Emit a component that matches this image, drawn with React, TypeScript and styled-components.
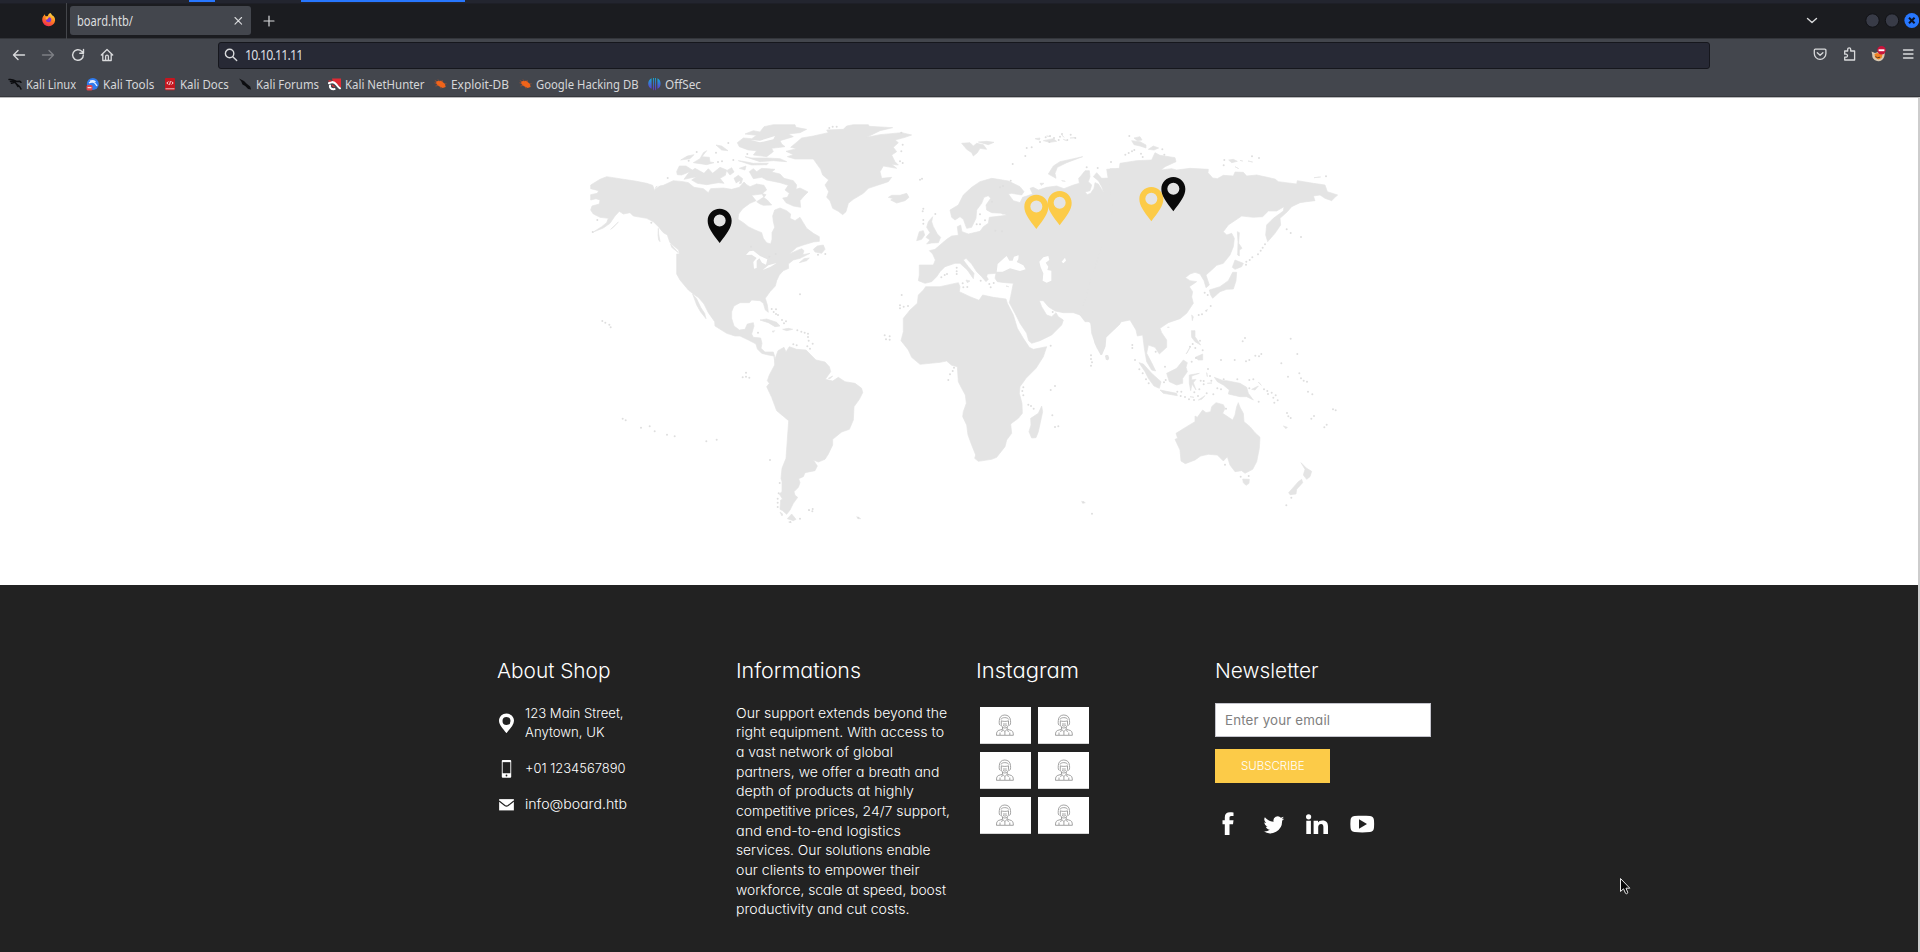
import React, { useLayoutEffect, useRef, useState } from 'react';
import styled, { createGlobalStyle } from 'styled-components';

const GlobalStyle = createGlobalStyle`
  * { box-sizing: border-box; }
  html, body { margin: 0; padding: 0; overflow: hidden; background: #fff; }
  ul { list-style: none; margin: 0; padding: 0; }
`;

const uiFont = `'Noto Sans', 'Open Sans', sans-serif`;
const siteFont = `Inter, 'Open Sans', sans-serif`;

/* ---------- text fitted to a set width ---------- */

const FitBox = styled.span<{ $w: number }>`
  display: block;
  flex: none;
  width: ${(p) => p.$w}px;
  white-space: nowrap;
`;
const FitInner = styled.span<{ $track?: number }>`
  display: inline-block;
  transform-origin: 0 50%;
  letter-spacing: ${(p) => p.$track ?? 0}px;
`;

function Fit({ w, track, children }: { w: number; track?: number; children: string }) {
  const ref = useRef<HTMLSpanElement>(null);
  const [scale, setScale] = useState(1);
  useLayoutEffect(() => {
    const el = ref.current;
    if (!el) return;
    el.style.transform = 'none';
    const natural = el.getBoundingClientRect().width;
    if (natural > 0) setScale(w / natural);
    el.style.transform = `scaleX(${w / natural})`;
  }, [w, children]);
  return (
    <FitBox $w={w}>
      <FitInner ref={ref} $track={track} style={{ transform: `scaleX(${scale})` }}>
        {children}
      </FitInner>
    </FitBox>
  );
}

/* ---------- browser chrome ---------- */

const Screen = styled.div`
  position: relative;
  width: 1920px;
  height: 952px;
  overflow: hidden;
  display: flex;
  flex-direction: column;
  background: #fff;
`;

const DesktopPanel = styled.div`
  display: flex;
  height: 4px;
  flex: none;
  padding-left: 189px;
  gap: 86px;
  background: linear-gradient(#23252f 0 3px, #1e1f27 3px);
`;
const PanelTask = styled.span<{ $w: number }>`
  width: ${(p) => p.$w}px;
  height: 2px;
  background: #2777ff;
`;

const TabStrip = styled.div`
  display: flex;
  align-items: center;
  height: 35px;
  flex: none;
  background: #1b1c20;
  border-bottom: 1px solid #33353a;
`;
const PinnedTab = styled.div`
  width: 67px;
  height: 36px;
  padding: 9px 0 0 41px;
  border-right: 1px solid #44464b;
`;
const Tab = styled.div`
  display: flex;
  align-items: center;
  justify-content: space-between;
  width: 181px;
  height: 29px;
  margin: 0 0 1px 3px;
  padding: 0 8px 0 7px;
  border-radius: 3px;
  background: #43464d;
  color: #dcdddf;
  font: 13.5px/20px ${uiFont};
`;
const PlusSlot = styled.div`
  display: flex;
  align-items: center;
  margin: 0 0 1px 12px;
  flex: 1;
`;
const WindowControls = styled.div`
  display: flex;
  align-items: center;
  padding-right: 1px;
  svg { display: block; }
`;

const Toolbar = styled.div`
  display: flex;
  align-items: center;
  height: 31px;
  flex: none;
  background: #43464d;
  padding: 1px 4px 0 11px;
  svg { display: block; flex: none; }
`;
const NavButtons = styled.div`
  display: flex;
  gap: 13.4px;
  width: 207px;
`;
const UrlBar = styled.div`
  display: flex;
  align-items: center;
  gap: 7px;
  width: 1492px;
  height: 27px;
  padding: 0 0 0 5px;
  border: 1px solid #16171d;
  border-radius: 3px;
  background: #272935;
  color: #dcdde0;
  font: 14px/22px ${uiFont};
`;
const ToolButtons = styled.div`
  display: flex;
  justify-content: space-between;
  flex: 1;
  padding-left: 102px;
`;

const Bookmarks = styled.ul`
  display: flex;
  gap: 8.5px;
  height: 27px;
  flex: none;
  padding: 0 0 0 8px;
  background: #43464d;
  border-bottom: 1px solid #35373c;
`;
const Bookmark = styled.li`
  display: flex;
  align-items: center;
  height: 28px;
  gap: 4px;
  color: #d6d7d9;
  font: 12.8px/20px ${uiFont};
  svg { display: block; flex: none; }
`;

const line = { fill: 'none', stroke: '#d9dadc', strokeWidth: 1.4, strokeLinecap: 'round', strokeLinejoin: 'round' } as const;

const Firefox = () => (
  <svg width="15" height="15" viewBox="0 0 15 15">
    <defs>
      <linearGradient id="ffx" x1=".8" y1="0" x2=".3" y2="1">
        <stop offset="0" stopColor="#ffe64a" />
        <stop offset=".45" stopColor="#ff8a1f" />
        <stop offset="1" stopColor="#f5234f" />
      </linearGradient>
    </defs>
    <path d="M9.2 1c1.2.8 1.6 1.5 1.9 2.3 1.9.9 3.2 2.600 3 5.200A6.300 6.300 0 0 1 7.700 14.200 6.300 6.300 0 0 1 1.200 8c0-2.200.7-3.500 1.700-4.500l.3-1.300L4.800 4.200 6.800 4c.5-1.600 1.300-2.500 2.400-3z" fill="url(#ffx)" />
    <path d="M7.800 5.200c2 .2 2.800 1.700 2.400 3.200-.4 1.400-1.600 2-2.800 1.900C5.600 10.200 4.900 9 5 7.700l1.700-.5z" fill="#7a35d8" />
    <path d="M4.500 5.500c.9-.7 2-.8 3.300-.300L6.800 6.600 5 7.700z" fill="#ffb636" />
  </svg>
);

const Dragon = () => (
  <svg width="14" height="14" viewBox="0 0 14 14">
    <path d="M1 2.500C4 2 6 3 8 4.200M2.500 4.500C5 3.700 7 4.500 8 6.500c1 1.700 3.500 1.200 5 5.500M3.500 6.200 6 5.600M8 4.500l3.800-.2 1.200 1M8.500 7 10 9.500" fill="none" stroke="#0c0d10" strokeWidth="1.500" strokeLinecap="round" />
  </svg>
);
const Tools = () => (
  <svg width="14" height="14" viewBox="0 0 14 14">
    <circle cx="7.800" cy="7" r="6" fill="#2f7bef" />
    <path d="M4 6c3-2 6-1 8 3M5 4.200c2-.8 4-.5 5.500.800" stroke="#e9f1ff" strokeWidth="1.300" fill="none" />
    <rect x="1.500" y="8" width="6" height="5.500" rx="1.500" fill="#e0454b" />
    <path d="M2.600 10.700h3.800" stroke="#fff" />
  </svg>
);
const Docs = () => (
  <svg width="14" height="14" viewBox="0 0 14 14">
    <rect x="3" y="1" width="10" height="12.300" rx="1" fill="#c5161f" />
    <path d="M3.500 11.800h9" stroke="#f3d8d8" strokeWidth=".9" />
    <path d="M6.300 4.500 4.800 6l1.500 1.500M9.700 4.500 11.200 6 9.700 7.500M8.400 4.200 7.600 7.800" stroke="#fff" strokeWidth=".9" fill="none" />
  </svg>
);
const Blade = () => (
  <svg width="14" height="14" viewBox="0 0 14 14">
    <path d="M1 1.500 6 4l3 3 3.200 2.600.9 2.900-3-.6L7.200 9 4.500 7.500 3.300 4.500z" fill="#0c0d10" />
  </svg>
);
const NetHunter = () => (
  <svg width="14" height="14" viewBox="0 0 14 14">
    <path d="M5 1.500h9V11L9.500 6.500 6 5z" fill="#e12a34" />
    <path d="M2 6.200c3.500-2.200 6-.5 7.500 1.500s2 2.800 3.500 3.600M3 8.500c-.5 2 1 4 4.500 3.600" fill="none" stroke="#fff" strokeWidth="2" strokeLinecap="round" />
    <path d="M1.500 3.800l3 .4M5 8l2.500 2" stroke="#e12a34" strokeWidth="1.300" />
  </svg>
);
const Bug = () => (
  <svg width="14" height="14" viewBox="0 0 14 14">
    <path d="M3.500 4.200 8 3.800l3.800 3 .9 3.200-3 .9-4.200-2L3 6.500z" fill="#f0641a" />
    <path d="M1.500 5.800 4 6.500M2.500 9l3-.7M5 2.500l1.500 2M9 3l.5 2M12 7l1.500-.3M8 11.500l-.5-1.500M1.800 3.500l2.200 1.200" stroke="#b6512a" strokeWidth=".7" />
  </svg>
);
const OffSec = () => (
  <svg width="14" height="14" viewBox="0 0 14 14">
    <defs>
      <linearGradient id="ofs" x1="0" y1="0" x2="0" y2="1">
        <stop offset="0" stopColor="#12b0d8" />
        <stop offset="1" stopColor="#6a2ad0" />
      </linearGradient>
    </defs>
    <path d="M4.600 1.300v10.500C2.300 11 1.200 9 1.200 6.800s1.100-4.400 3.400-5.500zM6 .9h.9v12.500L6 12.500zM8.100.9H9v11.600l-.9.9zM10.400 1.300c2.300 1.100 3.200 3.300 3.200 5.500s-.9 4.200-3.200 5z" fill="url(#ofs)" />
  </svg>
);

const bookmarks: { label: string; w: number; Icon: () => React.ReactElement }[] = [
  { label: 'Kali Linux', w: 50, Icon: Dragon },
  { label: 'Kali Tools', w: 51.300, Icon: Tools },
  { label: 'Kali Docs', w: 48.800, Icon: Docs },
  { label: 'Kali Forums', w: 63, Icon: Blade },
  { label: 'Kali NetHunter', w: 79.500, Icon: NetHunter },
  { label: 'Exploit-DB', w: 58, Icon: Bug },
  { label: 'Google Hacking DB', w: 102.500, Icon: Bug },
  { label: 'OffSec', w: 36, Icon: OffSec },
];

function BrowserChrome() {
  return (
    <>
      <DesktopPanel>
        <PanelTask $w={26} />
        <PanelTask $w={164} />
      </DesktopPanel>
      <TabStrip>
        <PinnedTab><Firefox /></PinnedTab>
        <Tab>
          <Fit w={56}>board.htb/</Fit>
          <svg width="10" height="10" viewBox="0 0 10 10"><path d="M2 1.500l6.600 6.600M8.600 1.500 2 8.100" {...line} strokeWidth={1.100} /></svg>
        </Tab>
        <PlusSlot>
          <svg width="12" height="12" viewBox="0 0 12 12"><path d="M6 1v10M1 6h10" {...line} strokeWidth={1.200} /></svg>
        </PlusSlot>
        <WindowControls>
          <svg width="114" height="18" viewBox="0 0 114 18">
            <path d="M2.500 6.500 7 10.500l4.500-4" {...line} />
            <circle cx="67.500" cy="8.500" r="6.700" fill="#383b47" stroke="#111216" />
            <circle cx="87" cy="8.500" r="6.700" fill="#383b47" stroke="#111216" />
            <circle cx="106.800" cy="8.500" r="7.400" fill="#2777ff" />
            <path d="M104 5.700l5.600 5.600M109.600 5.700 104 11.300" stroke="#0d1220" strokeWidth="2" />
          </svg>
        </WindowControls>
      </TabStrip>
      <Toolbar>
        <NavButtons>
          <svg width="16" height="16" viewBox="0 0 16 16"><path d="M2.500 8h11M7 3.500 2.500 8 7 12.500" {...line} /></svg>
          <svg width="16" height="16" viewBox="0 0 16 16"><path d="M2.500 8h11M9 3.500 13.500 8 9 12.500" {...line} stroke="#7d7f84" /></svg>
          <svg width="16" height="16" viewBox="0 0 16 16"><path d="M13.300 7.900A5.300 5.300 0 1 1 11.700 4.200l1.600 1.500M13.500 2.500v3.700H9.800" {...line} /></svg>
          <svg width="16" height="16" viewBox="0 0 16 16"><path d="M2.300 8 8 2.500 13.700 8M3.800 7v6.500h8.400V7M6.600 13.300V9.500a1.400 1.400 0 0 1 2.800 0v3.800" {...line} strokeWidth={1.300} /></svg>
        </NavButtons>
        <UrlBar>
          <svg width="14" height="14" viewBox="0 0 14 14"><circle cx="5.600" cy="5.500" r="4.200" {...line} /><path d="M8.800 8.700 12.700 12.600" {...line} /></svg>
          <Fit w={57.500} track={-0.900}>10.10.11.11</Fit>
        </UrlBar>
        <ToolButtons>
          <svg width="16" height="16" viewBox="0 0 16 16"><path d="M3.300 3.200h9.600a1 1 0 0 1 1 1V7.500a5.800 5.800 0 0 1-11.600 0V4.200a1 1 0 0 1 1-1zM5.300 6.700 8.100 9.300l2.800-2.600" {...line} strokeWidth={1.300} /></svg>
          <svg width="16" height="16" viewBox="0 0 16 16"><path d="M3.700 5h3V3.300a1.500 1.500 0 0 1 3 0V5h3.900v9H3.700V11.200H5a1.500 1.500 0 0 0 0-3H3.700z" {...line} strokeWidth={1.300} /></svg>
          <svg width="18" height="18" viewBox="-1 0 18 18">
            <path d="M1.500 5.500 5 7l3-1 3.500 1.300L14.500 6c.8 4-1 8.800-6 9.300C4.500 14.800 1.800 12 2.300 9z" fill="#d9c8ae" />
            <path d="M4.500 8 7 7l5.500 1.500-1 3.500-3 1.500L5 11.500z" fill="#ef8222" />
            <path d="M5.500 10.500l1.800 1.200 2.800-.5" stroke="#3a2a20" fill="none" strokeWidth=".8" />
            <circle cx="11.500" cy="4.200" r="4.200" fill="#c8143c" />
            <rect x="8.600" y="3.300" width="5.800" height="1.900" fill="#fff" />
          </svg>
          <svg width="16" height="16" viewBox="0 0 16 16"><path d="M3.500 4h9.500M3.500 8h9.500M3.500 12h9.500" {...line} strokeWidth={1.300} /></svg>
        </ToolButtons>
      </Toolbar>
      <Bookmarks>
        {bookmarks.map(({ label, w, Icon }) => (
          <Bookmark key={label}>
            <Icon />
            <Fit w={w}>{label}</Fit>
          </Bookmark>
        ))}
      </Bookmarks>
    </>
  );
}

/* ---------- world map ---------- */

const Page = styled.main`
  display: flex;
  flex-direction: column;
  flex: 1;
  border-right: 2px solid #cdcdcd;
  border-top: 1px solid #b9b9bb;
`;
const MapSection = styled.section`
  height: 487px;
  flex: none;
  padding: 12.4px 0 0 580px;
  svg { display: block; }
`;

type Dots = [number, number][];
const Islands = ({ at, r = 3 }: { at: Dots; r?: number }) => (
  <>
    {at.map(([x, y], i) => (
      <circle key={i} cx={x} cy={y} r={r} />
    ))}
  </>
);

const Pin = ({ x, y, color }: { x: number; y: number; color: string }) => (
  <path
    transform={`translate(${x} ${y})`}
    fill={color}
    fillRule="evenodd"
    d="M0 0C20 0 36 16 36 36C36 56 22 74 0 103C-22 74 -36 56 -36 36C-36 16 -20 0 0 0ZM0 17.500A18 18 0 1 0 0 53.500A18 18 0 1 0 0 17.500Z"
  />
);

function WorldMap() {
  return (
    <svg width="770" height="420" viewBox="0 0 2310 1260">
      <g fill="#e4e4e4" stroke="#e4e4e4" strokeWidth="2" strokeLinejoin="round">
        {/* North and Central America */}
        <path d="M32 225L60 208 80 200 100 203 125 207 165 213 200 220 218 226 224 242 228 230 250 226 280 212 310 215 325 218 342 232 370 236 385 248 392 236 430 234 455 238 478 232 492 216 500 224 510 230 530 222 552 226 560 240 545 252 515 256 528 272 510 280 488 296 476 312 474 328 490 338 505 350 525 360 545 368 550 385 560 398 572 402 576 388 576 368 584 352 580 335 578 318 584 300 600 294 620 302 632 312 630 325 645 332 660 322 668 335 680 355 700 370 718 380 718 394 700 396 670 405 650 412 628 432 650 422 665 416 672 422 668 434 690 430 660 445 640 450 625 462 626 475 610 482 598 495 590 512 586 528 570 545 556 565 562 585 565 607 556 600 550 580 540 572 515 570 508 578 480 578 462 588 455 605 455 625 462 648 478 660 495 658 502 642 520 638 522 648 515 672 520 682 542 684 546 700 543 715 555 726 580 726 583 738 565 735 545 730 532 717 528 702 505 690 480 678 465 678 440 670 405 648 404 635 385 608 372 582 356 563 340 552 325 540 300 510 290 492 290 432 298 432 296 420 270 398 262 375 250 368 235 350 220 335 200 325 160 318 150 308 130 312 118 304 105 318 90 340 70 354 40 366 65 350 80 338 85 325 60 322 40 312 32 300 36 288 58 282 60 270 48 266 32 270 32 254 52 250 56 242 32 236Z" />
        <path d="M338 552L350 585 362 606 378 626 374 610 362 592 350 566Z" />
        <path d="M272 402L295 428 275 412ZM235 355L234 375 236 390 240 395 236 372ZM92 358L115 336 100 352Z" />
        <path d="M540 630L560 627 590 637 600 648 585 650 565 638ZM608 658L625 655 638 658 620 662ZM576 664L584 662 580 667Z" />
        <path d="M700 418L712 408 730 405 735 418 725 430 705 426ZM658 458L672 446 688 444 680 452Z" />
        {/* Canadian archipelago */}
        <path d="M495 72L520 62 540 66 552 50 580 44 645 44 648 52 680 58 660 68 625 72 640 80 600 92 605 102 615 110 575 115 580 125 560 140 520 135 530 122 505 120 478 110 472 98 490 84 515 86 530 76Z" />
        <path d="M290 185L298 168 318 168 340 182 322 188 305 195 292 194ZM325 190L345 175 372 190 385 176 398 190 420 172 440 180 436 196 420 205 432 220 415 218 380 224 352 220 335 210 350 200 312 208ZM440 182L455 173 462 186 450 195ZM462 205L475 196 488 206 484 220 470 222ZM478 175L498 168 495 180ZM302 150L322 138 342 134 330 146ZM340 158L360 146 370 128 380 122 366 140 388 142 390 156 402 158 380 164ZM408 105L425 108 444 122 425 120ZM475 152L495 155 520 160 565 160 560 164 515 165ZM495 140L515 144 560 144 600 146 620 155 580 152 540 155Z" />
        <path d="M508 185L520 176 530 185 545 175 585 178 575 186 600 192 612 205 640 212 650 225 648 238 660 234 684 246 672 258 660 272 662 292 640 288 618 278 608 264 622 262 628 250 615 240 625 226 600 218 560 210 545 202 520 206ZM530 275L550 262 562 270 575 285 550 286 540 282ZM545 250L558 254 552 262Z" />
        {/* Greenland and Iceland */}
        <path d="M618 124L650 116 632 112 652 95 665 84 700 78 745 68 740 60 790 58 800 48 820 44 865 44 868 49 938 53 900 62 860 82 900 74 965 68 995 75 975 82 945 90 955 98 940 112 950 125 935 135 945 155 955 165 935 163 950 175 910 168 900 185 905 205 935 202 925 215 895 225 865 235 850 250 820 268 805 280 798 305 788 314 775 304 758 295 750 272 740 262 746 245 735 225 746 210 728 195 722 178 700 147 645 147 622 140 640 134Z" />
        <path d="M925 262L935 256 960 256 980 250 987 262 975 272 950 279 932 270 940 266Z" />
        {/* South America */}
        <g transform="translate(0 600)">
          <path d="M580 130L584 150 594 122 612 112 618 126 628 110 650 118 678 120 690 132 708 150 735 156 748 170 752 185 736 208 758 213 775 202 795 215 825 220 845 235 848 248 838 268 822 290 820 330 808 358 785 366 758 388 758 405 745 432 735 448 715 456 700 450 712 468 705 482 675 488 670 500 656 506 660 518 655 532 642 545 645 556 653 562 640 580 630 600 620 613 608 602 600 598 602 570 608 568 598 552 606 545 606 515 603 505 606 475 618 445 626 332 590 302 575 262 560 230 568 220 562 212 568 195 584 165 583 140Z" />
          <path d="M622 626L635 612 648 628 640 632ZM600 606L608 612 606 618ZM745 205L758 198 750 206ZM626 636L634 638ZM684 600L690 602ZM830 620L842 626 834 626Z" />
        </g>
        {/* Africa and Europe */}
        <g transform="translate(900 0)">
          <path d="M137 530L180 530 235 518 240 530 238 545 270 560 297 571 308 555 340 562 378 567 382 580 400 615 412 655 430 685 448 712 460 718 500 710 490 740 468 775 438 805 420 830 418 850 426 880 427 910 415 925 392 942 395 970 380 990 375 1010 350 1042 335 1048 295 1054 284 1045 287 1035 275 1005 264 975 260 945 248 920 250 905 259 880 256 855 245 835 235 815 232 770 215 766 200 753 180 757 120 763 95 742 85 720 63 692 70 665 70 625 90 600 112 580 115 555 130 540Z" />
          <path d="M118 465L160 465 166 450 158 432 148 422 165 418 180 405 200 388 215 378 235 376 232 350 242 345 246 365 265 372 300 364 310 350 325 340 328 322 380 316 370 310 335 308 320 300 318 285 332 265 325 257 312 262 305 280 290 300 288 325 275 352 260 355 250 328 240 320 225 330 215 322 210 300 235 285 250 255 275 232 300 215 335 205 355 208 385 213 420 230 432 245 425 255 395 250 385 252 400 272 420 278 428 262 440 258 458 252 450 235 460 232 475 240 500 232 530 228 552 236 580 225 598 220 596 205 605 195 615 182 628 182 630 200 625 215 635 225 630 242 615 246 622 254 632 250 642 235 645 218 655 222 665 238 672 250 665 230 655 212 640 200 650 188 665 205 690 204 700 210 698 195 682 185 690 176 720 178 720 642 678 682 675 710 663 735 650 712 635 670 632 635 615 635 600 615 580 608 550 608 525 603 505 590 490 572 478 572 485 590 500 615 515 620 528 608 535 620 550 630 545 645 515 675 480 692 455 700 446 692 440 670 420 640 405 610 388 578 392 560 400 520 375 518 352 515 345 505 348 490 322 492 320 500 325 508 318 515 305 500 290 485 275 462 258 445 250 450 265 470 282 490 280 506 262 480 240 460 225 460 195 470 180 485 170 500 155 515 135 520 115 512 118 495Z" />
          <path d="M505 192L520 168 540 155 608 140 560 158 532 172 525 190 528 205Z" />
          <path d="M140 402L150 390 138 382 150 368 140 352 145 335 158 320 155 335 160 350 172 372 182 382 175 398 155 399ZM110 392L118 365 130 362 134 375 125 388Z" />
          <path d="M485 888L488 905 475 965 468 983 455 984 447 965 453 945 452 925 475 910Z" />
          <path d="M245 100L270 98 280 108 290 100 310 104 320 118 300 115 292 128 280 138 275 128 260 118ZM295 96L320 94 342 97 325 104ZM465 86L480 84 478 90ZM490 92L520 86 530 94 510 97ZM500 78L512 80ZM545 74L552 82ZM570 84L585 83ZM550 88L560 92ZM480 220L492 220 484 226ZM545 212L556 214ZM362 306L372 304 380 310 368 313ZM258 510L270 513 262 518ZM378 528L386 530ZM676 738L684 736 686 746 680 748Z" />
        </g>
        {/* Asia */}
        <g transform="translate(1500 0)">
          <path d="M80 178L118 175 120 160 170 152 215 150 225 128 240 136 285 143 288 155 255 170 243 180 275 176 290 180 330 175 385 178 384 188 398 204 412 206 430 196 460 198 465 186 490 187 500 198 530 195 585 207 595 215 650 222 652 212 700 220 735 225 742 245 773 255 765 262 755 272 735 265 720 255 700 258 705 272 680 275 660 278 635 290 622 305 600 325 602 345 585 370 563 395 557 375 560 345 580 325 610 303 612 290 590 303 565 303 548 320 520 322 485 318 445 345 430 365 440 375 455 370 463 385 460 410 450 435 430 460 410 466 395 480 378 495 388 525 378 533 372 512 360 492 345 487 330 492 316 503 330 512 350 515 328 530 338 545 335 560 340 580 320 610 300 626 265 638 240 655 245 668 260 690 260 712 238 732 225 712 205 705 200 730 215 758 227 783 215 780 200 755 193 715 188 675 172 678 168 660 150 630 125 635 76 683 75 710 65 735 45 700 33 640 0 615 100 300Z" />
          <path d="M472 365L478 368 476 400 486 415 478 420 478 438 473 435 474 395ZM457 472L465 450 490 460 485 470 465 478ZM388 540L420 530 445 512 458 487 470 487 468 512 460 537 440 538 420 545 398 565 392 555ZM334 662L345 662 345 680 362 705 345 695 335 682ZM346 742L368 732 368 750 355 750ZM335 615L340 620 337 632ZM318 732L330 712 322 728ZM78 735L86 742 84 750 78 748ZM262 652L268 652ZM376 602L384 598" />
          <path d="M155 92L180 95 198 105 198 114 180 108 162 104ZM162 84L180 80 186 90 172 92ZM205 118L220 108 236 114 222 120ZM446 150L460 148 472 154 455 158ZM465 170L476 176ZM504 153L518 156ZM480 151L488 153ZM702 203L722 201Z" />
        </g>
        {/* Oceania */}
        <g transform="translate(1500 660)">
          <path d="M288 310L320 290 345 275 345 258 352 262 368 240 378 248 392 245 395 230 408 218 430 224 435 235 428 250 458 270 465 255 470 230 475 218 480 232 490 250 492 275 510 290 525 308 540 322 538 355 530 395 518 418 495 430 485 422 465 425 450 405 442 380 430 393 412 375 385 373 362 378 345 390 316 401 303 393 300 360 285 328 293 325Z" />
          <path d="M488 447L508 448 507 460 498 466 490 458ZM663 398L680 415 695 424 690 440 680 448 670 435 675 418ZM655 455L665 448 668 458 650 478 648 492 630 494 626 488ZM403 142L430 152 440 152 480 160 500 172 505 190 520 210 500 200 480 200 445 192 448 180 430 165 412 155ZM260 130L290 115 310 90 322 98 318 112 322 125 308 145 308 160 290 165 268 155ZM177 98L190 102 215 130 243 155 238 175 222 168 205 145 195 125ZM240 180L260 184 290 190 292 197 250 190ZM328 135L358 130 335 138 335 150 348 148 340 158 348 180 336 162 332 182 328 160ZM355 210L375 197 365 208ZM515 178L535 168 525 180ZM535 156L544 166ZM330 200L342 202ZM382 160L396 159ZM380 128L382 140ZM610 288L622 292 618 296ZM5 514L16 518 8 520Z" />
        </g>
      </g>
      {/* inland waters */}
      <g fill="#fff">
        <path d="M498 435L508 424 520 422 540 438 562 448 558 464 546 458 538 445 530 452 530 474 522 476 520 456 530 444 515 434ZM548 480L565 466 590 459 572 470ZM225 238L245 215 275 208 240 226ZM512 90L540 92 585 78 580 88 540 97ZM465 222L480 212 475 228ZM576 128L600 116 620 112 602 122Z" />
        <path d="M1250 485L1253 462 1272 445 1280 438 1288 452 1298 452 1302 440 1316 436 1315 448 1310 456 1330 466 1337 478 1320 483 1290 475 1268 485ZM1378 455L1390 442 1405 438 1408 450 1397 458 1405 470 1402 480 1414 482 1414 512 1400 518 1388 512 1390 490 1382 472ZM1445 455L1455 443 1458 452 1450 460Z" />
      </g>
      <g fill="#dedede">
        <Islands at={[[67, 633], [76, 638], [88, 644], [92, 652], [38, 366], [52, 330], [214, 338], [263, 204], [326, 152], [350, 126], [408, 128], [414, 156], [426, 154], [445, 99], [460, 150], [502, 132], [513, 410], [568, 440], [587, 432], [660, 553], [736, 432], [714, 434], [575, 597], [588, 598], [581, 606], [594, 615], [606, 630], [618, 634], [588, 612], [612, 640], [652, 661], [664, 665], [674, 668], [684, 671], [684, 681], [686, 692], [698, 701], [682, 709], [690, 716], [640, 703], [650, 706], [534, 668]]} />
        <Islands at={[[498, 788], [488, 802], [498, 800], [508, 803], [128, 926], [137, 931], [183, 953], [209, 949], [224, 964], [261, 974], [284, 979], [379, 994], [410, 989], [570, 1050], [599, 1119], [596, 1150], [593, 1166], [593, 1178], [593, 1191], [660, 1226], [631, 1236], [687, 1200], [698, 1197], [697, 1204], [835, 1223]]} />
        <Islands at={[[914, 676], [929, 679], [918, 688], [929, 689], [965, 555], [960, 586], [960, 595], [971, 590], [984, 588], [748, 54], [758, 50], [770, 50], [964, 68], [968, 104], [964, 124], [960, 154], [968, 159], [1020, 209], [1026, 206]]} />
        <Islands at={[[1340, 114], [1355, 112], [1336, 138], [1380, 96], [1408, 96], [1298, 162], [1292, 212], [1260, 232], [1269, 228], [1236, 275], [1030, 296], [1028, 304], [1030, 330], [1030, 341], [1066, 312], [1200, 313], [1215, 331], [1200, 343], [1190, 343], [1246, 362], [1266, 364], [1130, 473], [1130, 484], [1130, 492], [1101, 492], [1094, 495], [1084, 502], [1148, 520], [1150, 532], [1162, 531], [1202, 512], [1228, 522], [1232, 532], [1241, 519], [1412, 707], [1418, 606], [1533, 736], [1533, 747], [1536, 757], [1533, 767], [1122, 773], [1118, 783], [1110, 793], [1105, 810], [1330, 832], [1327, 843], [1330, 856], [1345, 884], [1353, 888], [1361, 896], [1425, 828], [1412, 840], [1417, 916], [1425, 951], [1435, 949], [1397, 82], [1410, 78], [1422, 84], [1436, 90], [1440, 80], [1446, 72], [1462, 90], [1472, 74], [1486, 84]]} />
        <Islands at={[[1648, 78], [1636, 134], [1646, 129], [1656, 124], [1663, 120], [1683, 131], [1688, 141], [1747, 118], [1753, 134], [1593, 156], [1520, 172], [1553, 174], [1933, 150], [1931, 166], [2016, 139], [2037, 144], [2238, 199], [2120, 358], [2132, 369], [2163, 381], [2055, 403], [2048, 413], [2042, 422], [2034, 433], [2017, 442], [2009, 450], [1998, 464], [1999, 455], [1874, 548], [1883, 555], [1892, 588], [1879, 602], [1866, 613], [1856, 615], [1995, 684], [1988, 694], [2132, 686], [2152, 732], [1657, 705], [1657, 714], [1860, 692], [1846, 714], [1838, 702], [1830, 710]]} />
        <Islands at={[[1665, 750], [1678, 778], [1688, 790], [1698, 808], [1706, 820], [1755, 770], [1727, 725], [1757, 810], [1752, 817], [1792, 845], [1804, 845], [1802, 858], [1815, 861], [1827, 868], [1842, 870], [1843, 847], [1854, 858], [1858, 838], [1862, 812], [1871, 813], [1871, 823], [1890, 798], [1894, 812], [1884, 777], [1835, 755], [1848, 744], [1868, 721], [1923, 750], [1964, 750], [1998, 754], [2008, 750], [2026, 737], [2037, 739], [2044, 732], [2104, 760], [2124, 800], [2158, 790], [2163, 805], [2171, 812], [2181, 815], [2184, 845], [2197, 853], [1931, 808], [1972, 808], [2008, 810], [2020, 808], [2008, 835], [2052, 838], [2062, 843], [2064, 852], [2075, 848], [2087, 856], [2080, 863], [2093, 871], [2083, 878], [2036, 875], [2121, 909], [2125, 919], [2132, 924], [2202, 918], [2194, 926], [2259, 898], [2267, 901], [2240, 944], [2233, 952], [1938, 896], [1935, 1064], [1982, 1100], [2006, 1098], [2134, 1163], [2119, 1186], [1510, 1177], [1536, 1211], [1880, 850], [1900, 853], [1912, 835], [1923, 838]]} />
      </g>
      <Pin x={419} y={296} color="#0a0a0a" />
      <Pin x={1369} y={254} color="#fccb48" />
      <Pin x={1439} y={243} color="#fccb48" />
      <Pin x={1714} y={231} color="#fccb48" />
      <Pin x={1780} y={201} color="#0a0a0a" />
    </svg>
  );
}

/* ---------- footer ---------- */

const Footer = styled.footer`
  flex: 1;
  background: #222;
`;
const Columns = styled.div`
  display: grid;
  grid-template-columns: repeat(4, 239.500px);
  padding: 70.600px 0 0 496.500px;
  color: #fff;
  font: 300 13.300px/19.650px ${siteFont};
  font-feature-settings: 'cv11';
`;
const Column = styled.section``;
const Heading = styled.h2`
  margin: 0 0 18.200px;
  font-weight: 300;
  font-size: 20.500px;
  line-height: 30px;
`;
const ContactList = styled.ul`
  display: flex;
  flex-direction: column;
  gap: 16.200px;
`;
const Contact = styled.li`
  display: flex;
  align-items: center;
  gap: 10.700px;
  svg { display: block; flex: none; margin-left: 1px; }
`;
const Gallery = styled.div`
  display: grid;
  grid-template-columns: repeat(2, 50.500px);
  grid-auto-rows: 37px;
  gap: 8px 7.600px;
  padding: 3.200px 0 0 4.700px;
`;
const Thumb = styled.div`
  display: flex;
  justify-content: center;
  align-items: center;
  background: #fff;
  border: solid #d5d5d5;
  border-width: 0 0 1px;
  svg { display: block; }
`;
const EmailInput = styled.input`
  display: block;
  width: 215.500px;
  height: 34px;
  margin: -1px 0 12px 0;
  padding: 0 0 0 9px;
  border: 1px solid #c4c4cc;
  border-radius: 0;
  background: #fff;
  font: 400 13.300px/20px ${siteFont};
  font-feature-settings: 'cv11';
  letter-spacing: .180px;
  &::placeholder { color: #808080; opacity: 1; }
`;
const Subscribe = styled.button`
  display: flex;
  align-items: center;
  justify-content: center;
  width: 115px;
  height: 34px;
  padding: 1px 0 0;
  border: 0;
  background: #fccb48;
  color: #fff;
  font: 300 11.800px/20px ${siteFont};
`;
const Social = styled.div`
  margin: 28px 0 0;
  svg { display: block; }
`;
const Pointer = styled.svg`
  position: absolute;
  left: 1619px;
  top: 877px;
`;

const about = [
  { lines: [['123 Main Street,', 98.500], ['Anytown, UK', 79.500]], icon: <path d="M7.500.5c4.200 0 7.500 3.200 7.500 7.200 0 4-4 8-7.500 12.500C4 15.700 0 11.700 0 7.700 0 3.700 3.300.5 7.500.500zM7.500 4a4 4 0 1 0 0 8 4 4 0 1 0 0-8z" fill="#fff" fillRule="evenodd" /> },
  { lines: [['+01 1234567890', 100.500]], icon: <><path d="M3.700 1h7.600a1 1 0 0 1 1 1v16a1 1 0 0 1-1 1H3.700a1 1 0 0 1-1-1V2a1 1 0 0 1 1-1z" fill="#fff" /><path d="M3.600 3.200h7.800v11.300H3.600z" fill="#222" /><circle cx="7.500" cy="16.800" r=".9" fill="#222" /></> },
  { lines: [['info@board.htb', 102]], icon: <><path d="M0 4.200h15V15.700H0z" fill="#fff" /><path d="M0 6.200 5.800 10.700q1.700 1.200 3.400 0L15 6.200" fill="none" stroke="#222" strokeWidth="1.200" /></> },
] as { lines: [string, number][]; icon: React.ReactNode }[];

const information: [string, number][] = [
  ['Our support extends beyond the', 211.200],
  ['right equipment. With access to', 208],
  ['a vast network of global', 157],
  ['partners, we offer a breath and', 203.500],
  ['depth of products at highly', 178],
  ['competitive prices, 24/7 support,', 214],
  ['and end-to-end logistics', 165],
  ['services. Our solutions enable', 194.500],
  ['our clients to empower their', 183.500],
  ['workforce, scale at speed, boost', 210],
  ['productivity and cut costs.', 173.500],
];

const Person = () => (
  <svg width="20" height="24" viewBox="0 0 20 24" fill="none" stroke="#8d8d8d" strokeWidth=".8">
    <path d="M5.500 12.500C4.300 12 4 10.500 4.300 7.500 4.500 4 6.500 2 9.800 2s5.500 2 5.700 5.500c.300 3 0 4.500-1.200 5M6.300 7.800c1.500.8 5.500.8 7.200 0v3.500c0 1.800-1.500 3.700-3.700 3.700s-3.500-1.900-3.500-3.700zM6 6.500c.5-2.500 7-2.500 7.700 0M8 11h3.800M8 12.500q2 1.300 3.800 0M7.500 14v2.300l2.400 2.200 2.300-2.200V14M1.500 22c0-3 .5-4.300 3.500-5l2.500-.7M18.300 22c0-3-.5-4.300-3.500-5l-2.500-.7M1.200 22.300h17.400M5 19.500V22M14.800 19.500V22M9.900 18.500V22M7.500 17l-1 2M12.500 17l1 2" />
  </svg>
);

function SiteFooter() {
  return (
    <Footer>
      <Columns>
        <Column>
          <Heading><Fit w={113.500}>About Shop</Fit></Heading>
          <ContactList>
            {about.map(({ lines, icon }) => (
              <Contact key={lines[0][0]}>
                <svg width="17" height={lines.length > 1 ? 20 : 19.65} viewBox="-1 0 17 20">{icon}</svg>
                <div>{lines.map(([t, w]) => <Fit key={t} w={w}>{t}</Fit>)}</div>
              </Contact>
            ))}
          </ContactList>
        </Column>
        <Column>
          <Heading><Fit w={125}>Informations</Fit></Heading>
          {information.map(([t, w]) => <Fit key={t} w={w}>{t}</Fit>)}
        </Column>
        <Column>
          <Heading><Fit w={103}>Instagram</Fit></Heading>
          <Gallery>
            {[0, 1, 2, 3, 4, 5].map((n) => <Thumb key={n}><Person /></Thumb>)}
          </Gallery>
        </Column>
        <Column>
          <Heading><Fit w={103.500}>Newsletter</Fit></Heading>
          <EmailInput placeholder="Enter your email" />
          <Subscribe><Fit w={63.500}>SUBSCRIBE</Fit></Subscribe>
          <Social>
            <svg width="165" height="26" viewBox="0 0 165 26" fill="#fff">
              <path d="M18.500 1.500v3.600h-2.200c-1.500 0-1.800.8-1.800 1.900v2.300h4l-.5 3.900h-3.500V24h-4.700V13.200H7.500V9.300h2.300V6.300c0-3.200 1.900-5 5.200-5 1.500 0 3 .1 3.500.2z" />
              <path transform="translate(48 3) scale(.9)" d="M23.600 4.900c-.8.400-1.700.6-2.700.8 1-.6 1.700-1.500 2-2.600-.9.500-1.900.9-3 1.100A4.700 4.700 0 0 0 11.800 8.500C7.900 8.300 4.500 6.400 2.100 3.600c-1.300 2.200-.600 4.900 1.500 6.300-.8 0-1.500-.2-2.100-.6 0 2.300 1.600 4.200 3.800 4.700-.7.200-1.400.200-2.100.1.600 1.900 2.300 3.200 4.400 3.300A9.500 9.500 0 0 1 .6 19.300a13.400 13.400 0 0 0 20.600-11.900c.9-.7 1.700-1.500 2.400-2.500z" />
              <path d="M91.300 9.700h4.600v13.200h-4.600zM93.600 3.200a2.600 2.600 0 1 1 0 5.200 2.600 2.600 0 1 1 0-5.200zM98.600 9.700h4.400v1.900c.7-1.300 2.200-2.200 4.300-2.200 4.400 0 5.700 2.500 5.700 6.200v7.300h-4.600v-6.600c0-1.800-.4-3.200-2.300-3.200s-2.900 1.300-2.900 3.200v6.600h-4.600z" />
              <path fillRule="evenodd" d="M139.500 5c5-.5 10.500-.5 15.500 0 3 .3 3.800 2 4 4.500q.3 3.500 0 7c-.2 2.500-1 4.200-4 4.500-5 .5-10.500.5-15.500 0-3-.3-3.800-2-4-4.500q-.3-3.500 0-7c.2-2.500 1-4.200 4-4.500zM144 8.200v9.600l8-4.800z" />
            </svg>
          </Social>
        </Column>
      </Columns>
    </Footer>
  );
}

export default function App() {
  return (
    <Screen>
      <GlobalStyle />
      <BrowserChrome />
      <Page>
        <MapSection><WorldMap /></MapSection>
        <SiteFooter />
      </Page>
      <Pointer width="14" height="20" viewBox="0 0 14 20">
        <path d="M1.500 1.500v13l3-2.700 2 4.500c1 1 2.500.3 2.200-1L7 11.200h3.800z" fill="#060606" stroke="#e8e8e8" strokeWidth="1" />
      </Pointer>
    </Screen>
  );
}
